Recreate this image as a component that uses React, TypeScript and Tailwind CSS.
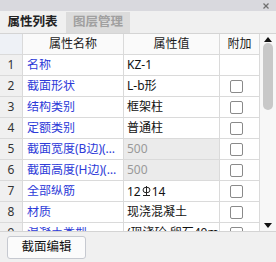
import React from "react";

type Row = { n: number; name: string; value: React.ReactNode; check: boolean; disabled?: boolean };

const Rebar = () => (
  <svg width="9" height="12" viewBox="0 0 9 12" className="inline-block mx-[1px] align-[-1px]">
    <ellipse cx="4.5" cy="5" rx="3.5" ry="2.8" fill="none" stroke="#222" strokeWidth="1" />
    <line x1="4.5" y1="1" x2="4.5" y2="10.5" stroke="#222" strokeWidth="1" />
    <line x1="1" y1="10.5" x2="8" y2="10.5" stroke="#222" strokeWidth="1" />
  </svg>
);

const rows: Row[] = [
  { n: 1, name: "名称", value: "KZ-1", check: false },
  { n: 2, name: "截面形状", value: "L-b形", check: true },
  { n: 3, name: "结构类别", value: "框架柱", check: true },
  { n: 4, name: "定额类别", value: "普通柱", check: true },
  { n: 5, name: "截面宽度(B边)(mm)", value: "500", check: true, disabled: true },
  { n: 6, name: "截面高度(H边)(mm)", value: "500", check: true, disabled: true },
  { n: 7, name: "全部纵筋", value: (<span>12<Rebar />14</span>), check: true },
  { n: 8, name: "材质", value: "现浇混凝土", check: true },
  { n: 9, name: "混凝土类型", value: "(现浇砼 卵石40mm)", check: true },
];

export default function App() {
  return (
    <div
      className="w-[276px] h-[262px] bg-[#f0f0f0] flex flex-col overflow-hidden text-[12px] text-[#1a1a1a]"
      style={{ fontFamily: '"Noto Sans", "Noto Sans CJK SC", sans-serif' }}
    >
      {/* title strip */}
      <div className="h-[11px] bg-[#d9d9de] flex items-center justify-end pr-[7px] shrink-0">
        <svg width="6" height="6" viewBox="0 0 6 6">
          <line x1="0.5" y1="0.5" x2="5.5" y2="5.5" stroke="#707070" strokeWidth="1.3" />
          <line x1="5.5" y1="0.5" x2="0.5" y2="5.5" stroke="#707070" strokeWidth="1.3" />
        </svg>
      </div>
      {/* tabs */}
      <div className="h-[22px] flex shrink-0 bg-[#f0f0f0]">
        <div className="w-[65px] flex items-center justify-center font-bold text-[12.5px] text-[#222] bg-[#f0f0f0] leading-none">
          属性列表
        </div>
        <div className="w-[64px] ml-[1px] mt-[1px] flex items-center justify-center text-[12.5px] text-[#a0a0a0] bg-[#dcdcdc] font-bold leading-none">
          图层管理
        </div>
      </div>
      {/* table */}
      <div className="h-[199px] shrink-0 border-y border-[#d4d4d4] bg-white flex overflow-hidden">
        <div className="w-[260px] flex flex-col">
          <div className="h-[21px] shrink-0 grid grid-cols-[23px_101px_96px_40px] border-b border-[#dadada] bg-[#fafafa]">
            <div className="border-r border-[#dadada] bg-[#eef1f6]" />
            <div className="border-r border-[#dadada] flex items-center justify-center leading-none">属性名称</div>
            <div className="border-r border-[#dadada] flex items-center justify-center leading-none">属性值</div>
            <div className="border-r border-[#dadada] flex items-center justify-center leading-none">附加</div>
          </div>
          {rows.map((r) => (
            <div
              key={r.n}
              className="h-[21px] shrink-0 grid grid-cols-[23px_101px_96px_40px] border-b border-[#dadada]"
            >
              <div className="border-r border-[#dadada] bg-[#f0f0f0] flex items-center justify-center text-[#333] leading-none">
                {r.n}
              </div>
              <div className="border-r border-[#dadada] flex items-center pl-[4px] text-[#2d3ad8] leading-none overflow-hidden">
                <span className="truncate">{r.name}</span>
              </div>
              <div
                className={
                  r.disabled
                    ? "border-r border-[#dadada] flex items-center pl-[3px] bg-[#ebebeb] text-[#999] leading-none overflow-hidden whitespace-nowrap"
                    : "border-r border-[#dadada] flex items-center pl-[3px] text-[#111] leading-none overflow-hidden whitespace-nowrap"
                }
              >
                {r.value}
              </div>
              <div className="border-r border-[#dadada] flex items-center pl-[10px]">
                {r.check && (
                  <div className="w-[13px] h-[13px] rounded-[2px] border border-[#8a8a8a] bg-white" />
                )}
              </div>
            </div>
          ))}
        </div>
        {/* scrollbar */}
        <div className="w-[16px] bg-[#f7f7f7] flex flex-col items-center">
          <svg width="8" height="5" viewBox="0 0 8 5" className="mt-[3px]">
            <polygon points="4,0 8,5 0,5" fill="#111" />
          </svg>
          <div className="w-[10px] h-[67px] mt-[1px] rounded-full bg-[#c8c8c8]" />
          <div className="flex-1" />
          <svg width="8" height="5" viewBox="0 0 8 5" className="mb-[3px]">
            <polygon points="0,0 8,0 4,5" fill="#111" />
          </svg>
        </div>
      </div>
      {/* bottom */}
      <div className="flex-1 pl-[7px] pt-[4px]">
        <button className="w-[79px] h-[23px] rounded-[3px] border border-[#c6c9d0] bg-[#fbfbfb] text-[12.5px] text-[#111] flex items-center justify-center leading-none">
          截面编辑
        </button>
      </div>
    </div>
  );
}
